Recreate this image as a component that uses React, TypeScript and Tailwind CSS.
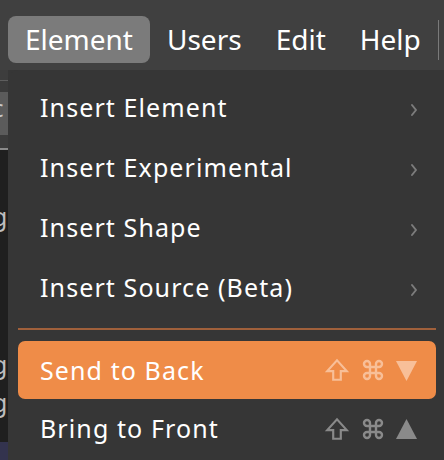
import React from "react";

const font = { fontFamily: '"Noto Sans", "DejaVu Sans", sans-serif' };

const TOP = ["Element", "Users", "Edit", "Help"];

const ITEMS = ["Insert Element", "Insert Experimental", "Insert Shape", "Insert Source (Beta)"];

function Chevron() {
  return (
    <svg width="8" height="14" viewBox="0 0 8 14" className="mt-[6px]">
      <path d="M2 2l4 5-4 5" fill="none" stroke="#7c7c7c" strokeWidth="2" strokeLinecap="round" strokeLinejoin="round" />
    </svg>
  );
}

function Shortcut({ color, down }: { color: string; down?: boolean }) {
  return (
    <div className="flex items-center gap-[11px]">
      <svg width="26" height="26" viewBox="0 0 24 24">
        <path d="M8.5 21v-8H3L12 3l9 10h-5.5v8z" fill="none" stroke={color} strokeWidth="2" strokeLinejoin="miter" />
      </svg>
      <svg width="24" height="24" viewBox="0 0 24 24">
        <path
          d="M15 6v12a3 3 0 1 0 3-3H6a3 3 0 1 0 3 3V6a3 3 0 1 0-3 3h12a3 3 0 1 0-3-3"
          fill="none"
          stroke={color}
          strokeWidth="2.4"
        />
      </svg>
      <svg width="21" height="21" viewBox="0 0 20 20">
        {down ? <path d="M0 1h20L10 20z" fill={color} /> : <path d="M0 19h20L10 0z" fill={color} />}
      </svg>
    </div>
  );
}

export default function App() {
  return (
    <div className="relative flex h-[460px] w-[444px] flex-col overflow-hidden bg-[#363636] text-white" style={font}>
      <div className="flex h-[70px] shrink-0 items-start bg-[#404040] pl-[8px] pt-[16px]">
        {TOP.map((t, i) => (
          <div
            key={t}
            className={
              "flex h-[47px] items-center px-[17px] text-[28px] leading-none " +
              (i === 0 ? "rounded-[8px] bg-[#7b7b7b]" : "")
            }
          >
            <span className="-mt-[2px]">{t}</span>
          </div>
        ))}
        <div className="ml-auto mr-[5px] mt-[4px] h-[40px] w-[2px] bg-[#7a7a7a]" />
      </div>

      <div className="flex flex-1">
        <div className="flex w-[8px] shrink-0 flex-col bg-[#1f1f1f] text-[#bdbdbd]">
          <div className="h-[10px] bg-[#3d3d3d]" />
          <div className="h-[1px] bg-[#5e5e5e]" />
          <div className="h-[11px] bg-[#3b3b3b]" />
          <div className="relative h-[43px] overflow-hidden bg-[#5b5b5b]">
            <span className="absolute -left-[8px] top-[4px] text-[24px] leading-none text-[#c8c8c8]">c</span>
          </div>
          <div className="h-[13px] bg-[#3b3b3b]" />
          <div className="h-[2px] bg-[#8a8a8a]" />
          <div className="relative flex-1 overflow-hidden">
            <span className="absolute -left-[8px] top-[54px] text-[25px] leading-none">g</span>
            <span className="absolute -left-[8px] top-[202px] text-[25px] leading-none">g</span>
            <span className="absolute -left-[8px] top-[240px] text-[25px] leading-none">g</span>
            <div className="absolute bottom-0 left-0 h-[18px] w-full bg-[#33334e]" />
          </div>
        </div>

        <div className="flex flex-1 flex-col rounded-tl-[10px] bg-[#363636] pt-[7px]">
          {ITEMS.map((t) => (
            <div key={t} className="flex h-[60px] items-center justify-between pl-[32px] pr-[26px] text-[25px] leading-none tracking-[1.1px]">
              <span>{t}</span>
              <Chevron />
            </div>
          ))}
          <div className="ml-[10px] mr-[8px] mt-[11px] h-[2px] bg-[#a0603b]" />
          <div className="ml-[10px] mr-[8px] mt-[11px] flex h-[58px] items-center justify-between rounded-[7px] bg-[#ef8c48] pl-[22px] pr-[19px] text-[25px] leading-none tracking-[1.1px]">
            <span>Send to Back</span>
            <Shortcut color="#f8bf98" down />
          </div>
          <div className="ml-[10px] mr-[8px] flex h-[60px] items-center justify-between pl-[22px] pr-[19px] text-[25px] leading-none tracking-[1.1px]">
            <span className="-mt-[2px]">Bring to Front</span>
            <Shortcut color="#8a8a8a" />
          </div>
        </div>
      </div>
    </div>
  );
}
